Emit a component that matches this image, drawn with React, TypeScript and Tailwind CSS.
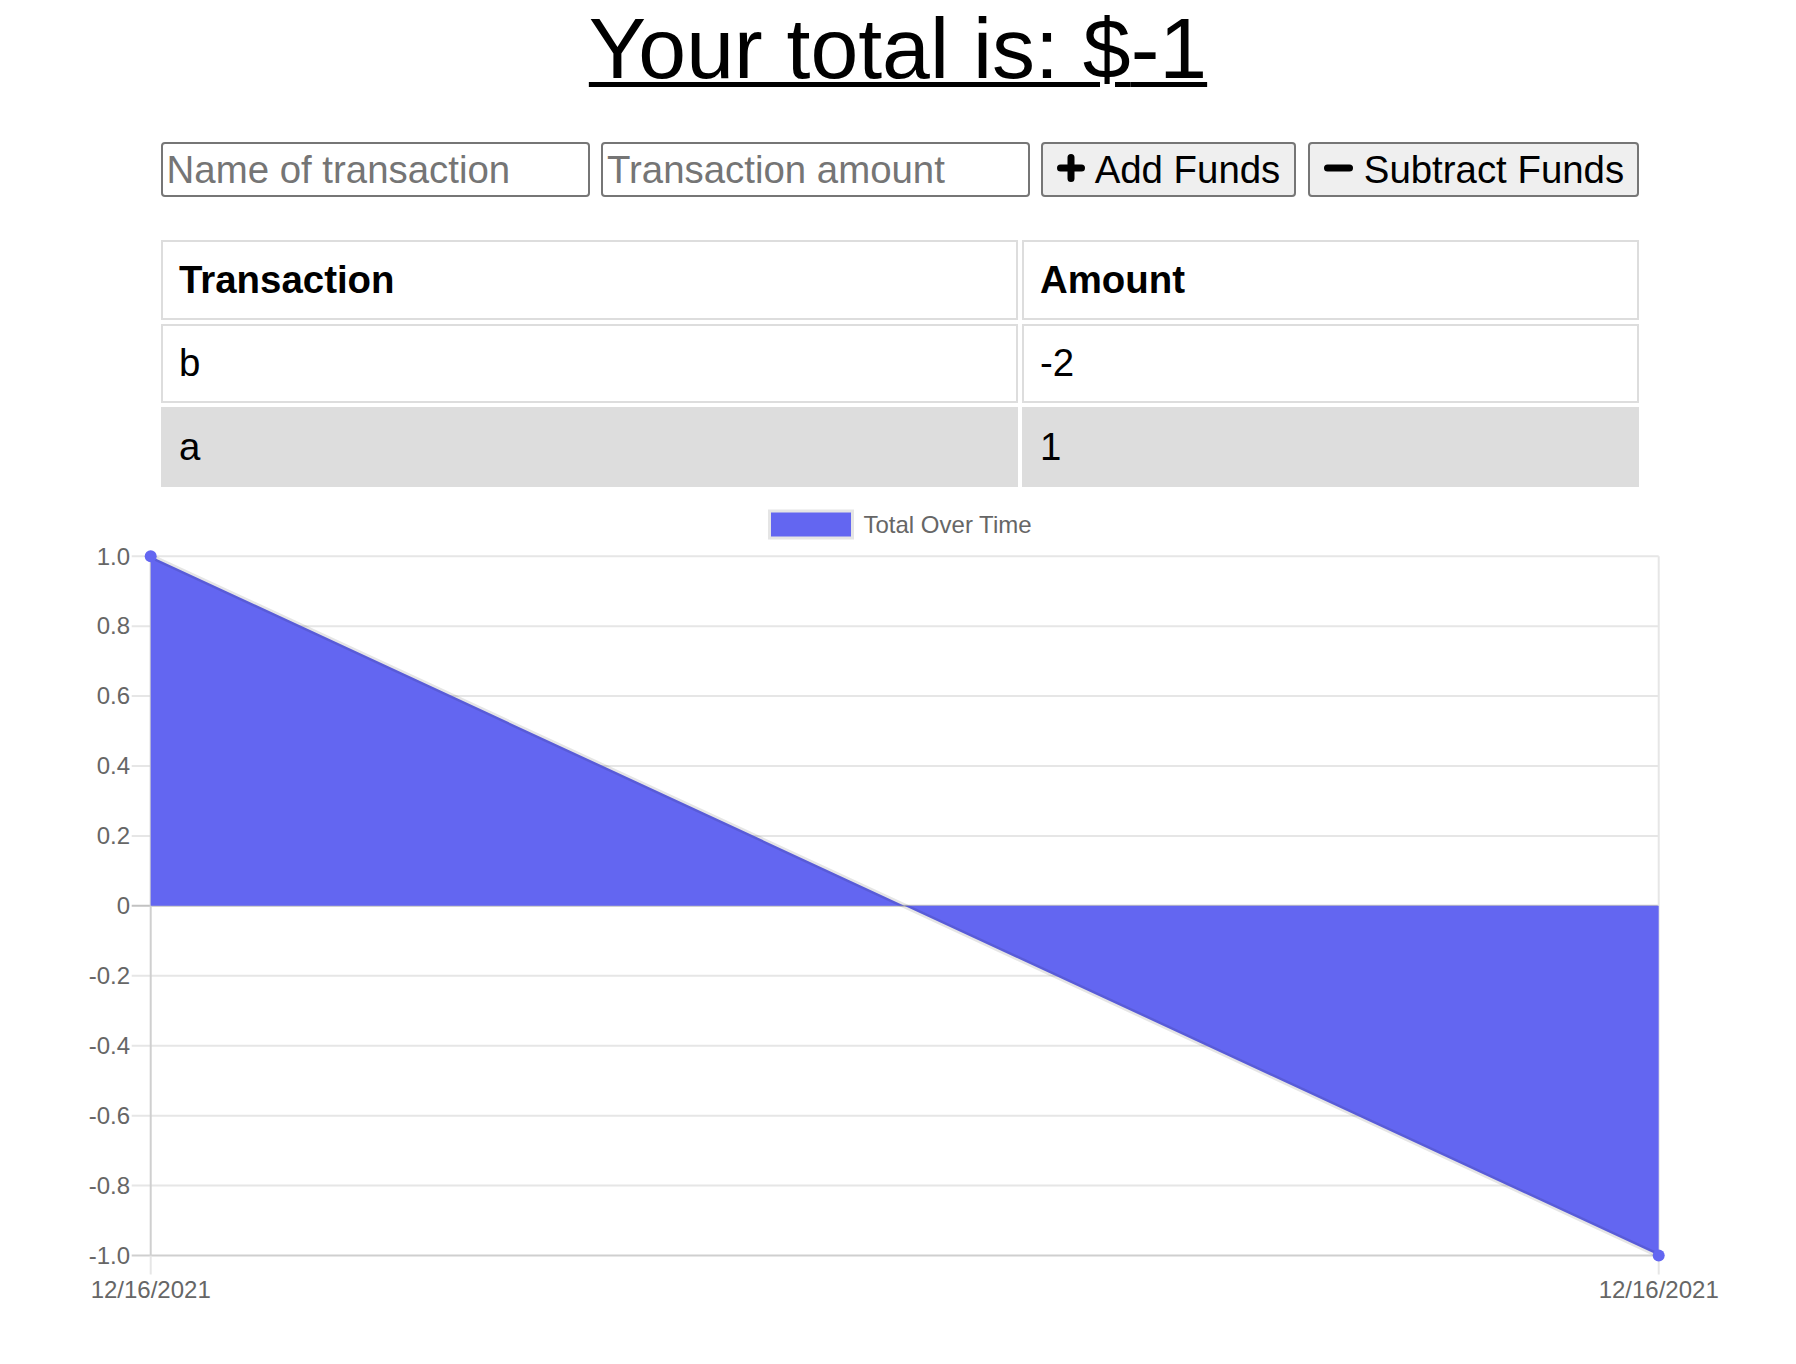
import React from "react";

type Transaction = { name: string; value: number };

const transactions: Transaction[] = [
  { name: "b", value: -2 },
  { name: "a", value: 1 },
];

// chart geometry, page coordinates
const LEFT = 150.7;
const RIGHT = 1658.7;
const TOP = 555.7;
const STEP = 69.93;
const ticks = ["1.0", "0.8", "0.6", "0.4", "0.2", "0", "-0.2", "-0.4", "-0.6", "-0.8", "-1.0"];
const FILL = "#6366f1";

function yFor(value: number) {
  // 1.0 at the top line, -1.0 at the bottom line
  return TOP + ((1 - value) / 0.2) * STEP;
}

function PlusIcon() {
  return (
    <svg width="28" height="28" viewBox="0 0 28 28" className="-mt-[4px] shrink-0">
      <path d="M14 3.5V24.5M3.5 14H24.5" stroke="#000" strokeWidth="7" strokeLinecap="round" />
    </svg>
  );
}

function MinusIcon() {
  return (
    <svg width="29" height="8" viewBox="0 0 29 8" className="-mt-[4px] shrink-0">
      <path d="M3.5 4H25.5" stroke="#000" strokeWidth="7" strokeLinecap="round" />
    </svg>
  );
}

function TotalChart() {
  const zeroY = yFor(0);
  const bottom = yFor(-1);
  const start = yFor(1);
  const end = yFor(-1);

  return (
    <svg width="1796" height="830" viewBox="0 490.5 1796 830" className="block">
      {/* legend */}
      <rect x="769.5" y="510.5" width="83" height="27" fill={FILL} stroke="#e5e5e5" strokeWidth="3" />
      <text x="863.5" y="532.3" fontSize="24" fill="#666" fontFamily="'Liberation Sans', Arial, sans-serif">
        Total Over Time
      </text>

      {/* horizontal grid + y labels */}
      {ticks.map((label, i) => {
        const y = TOP + i * STEP;
        const isZero = label === "0";
        const isBottom = i === ticks.length - 1;
        return (
          <g key={label}>
            <line
              x1="131.7"
              x2={RIGHT}
              y1={y}
              y2={y}
              stroke={isZero ? "#c2c2c2" : isBottom ? "#cfcfcf" : "#e6e6e6"}
              strokeWidth="2"
            />
            <text
              x="130"
              y={y + 8.3}
              fontSize="24"
              fill="#666"
              textAnchor="end"
              fontFamily="'Liberation Sans', Arial, sans-serif"
            >
              {label}
            </text>
          </g>
        );
      })}

      {/* vertical grid */}
      <line x1={RIGHT} x2={RIGHT} y1={TOP} y2={bottom + 19} stroke="#e6e6e6" strokeWidth="2" />
      <line x1={LEFT} x2={LEFT} y1={bottom} y2={bottom + 19} stroke="#e6e6e6" strokeWidth="2" />
      <line x1={LEFT} x2={LEFT} y1={TOP} y2={bottom} stroke="#cfcfcf" strokeWidth="2" />

      {/* area filled to zero */}
      <polygon
        points={`${LEFT},${zeroY} ${LEFT},${start} ${RIGHT},${end} ${RIGHT},${zeroY}`}
        fill={FILL}
      />
      <line x1={LEFT} y1={start} x2={RIGHT} y2={end} stroke="rgba(0,0,0,0.1)" strokeWidth="5" />
      <circle cx={LEFT} cy={start} r="6" fill={FILL} />
      <circle cx={RIGHT} cy={end} r="6" fill={FILL} />

      {/* x labels */}
      {[LEFT, RIGHT].map((x) => (
        <text
          key={x}
          x={x}
          y="1297"
          fontSize="24"
          fill="#666"
          textAnchor="middle"
          fontFamily="'Liberation Sans', Arial, sans-serif"
        >
          12/16/2021
        </text>
      ))}
    </svg>
  );
}

export default function App() {
  const total = transactions.reduce((sum, t) => sum + t.value, 0);

  return (
    <div className="min-h-screen bg-white font-['Liberation_Sans',Arial,sans-serif] text-black">
      <h1 className="m-0 text-center text-[86px] font-normal leading-[96px] underline decoration-[5px] underline-offset-[4px]">
        Your total is: ${total}
      </h1>

      <form className="ml-[160.6px] mt-[46px] flex h-[55px] items-stretch" onSubmit={(e) => e.preventDefault()}>
        <input
          type="text"
          placeholder="Name of transaction"
          className="w-[429px] rounded-[4px] border-2 border-[#767676] bg-white pl-[4px] text-[38.4px] text-black outline-none placeholder:text-[#757575]"
        />
        <input
          type="number"
          placeholder="Transaction amount"
          className="ml-[11.4px] w-[429px] rounded-[4px] border-2 border-[#767676] bg-white pl-[4px] text-[38.4px] text-black outline-none placeholder:text-[#757575]"
        />
        <button
          type="button"
          className="ml-[11px] flex w-[255px] items-center justify-center gap-[10px] rounded-[4px] border-2 border-[#767676] bg-[#efefef] text-[38.4px]"
        >
          <PlusIcon />
          <span>Add Funds</span>
        </button>
        <button
          type="button"
          className="ml-[12.5px] flex w-[331px] items-center justify-center gap-[11px] rounded-[4px] border-2 border-[#767676] bg-[#efefef] text-[38.4px]"
        >
          <MinusIcon />
          <span>Subtract Funds</span>
        </button>
      </form>

      <table className="ml-[157px] mt-[39px] border-separate border-spacing-[4.6px] text-[38.4px] leading-[44px]">
        <thead>
          <tr>
            <th className="h-[79.5px] w-[857px] border-2 border-[#dddddd] px-[16px] py-0 text-left font-bold">Transaction</th>
            <th className="h-[79.5px] w-[617px] border-2 border-[#dddddd] px-[16px] py-0 text-left font-bold">Amount</th>
          </tr>
        </thead>
        <tbody>
          {transactions.map((t, i) => (
            <tr key={t.name} className={i % 2 === 1 ? "bg-[#dddddd]" : ""}>
              <td className="h-[79.5px] border-2 border-[#dddddd] px-[16px] py-0">{t.name}</td>
              <td className="h-[79.5px] border-2 border-[#dddddd] px-[16px] py-0">{t.value}</td>
            </tr>
          ))}
        </tbody>
      </table>

      <TotalChart />
    </div>
  );
}
